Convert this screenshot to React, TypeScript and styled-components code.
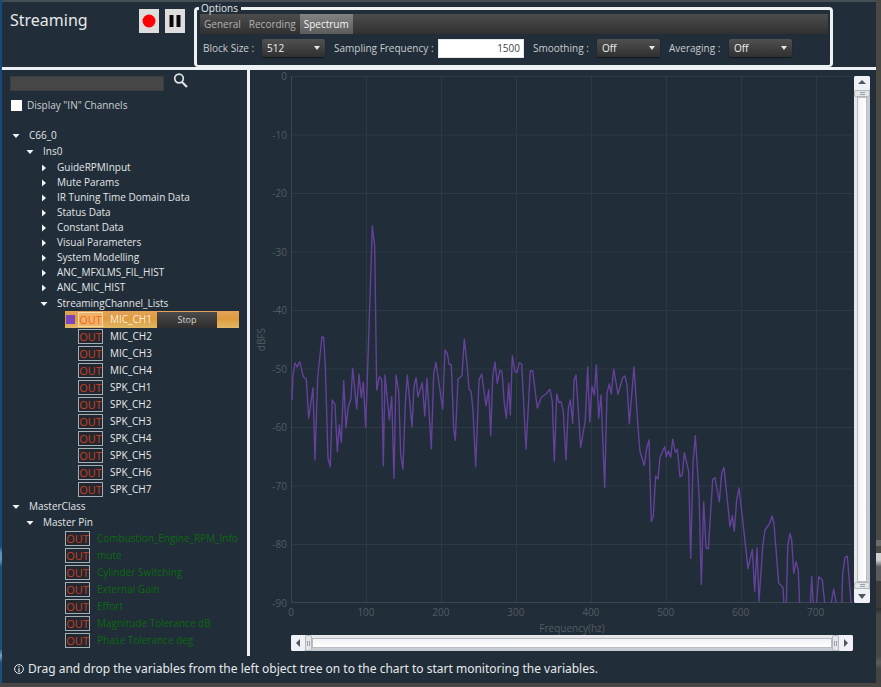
import React, { useState } from "react";
import styled, { createGlobalStyle, css } from "styled-components";

const GlobalStyle = createGlobalStyle`
  * { box-sizing: border-box; }
  body { margin: 0; background: #4a4948; }
  body, button, input, select { font-family: "Open Sans", "Noto Sans", sans-serif; }
`;

const Desktop = styled.div`
  display: grid;
  grid-template-columns: 2px minmax(0, 1fr) 5px;
  grid-template-rows: minmax(0, 1fr) 5px;
  min-height: 100vh;
  background: #484746;
`;

const LeftEdge = styled.div`
  background: linear-gradient(#174a78 0 80%, #5f93b8 81% 82%, #1d4e7c 83% 95%, #7aa3c0 96%, #1d4e7c 97%);
`;

const RightEdge = styled.div`
  background: linear-gradient(
    #4b4743 0 79%, #6b6b6b 79% 80%, #4b4743 80% 81%, #cfcfcf 81% 82%,
    #5a5a5a 83% 85%, #3d3a39 85% 89%, #2d2b2a 89%, #474747 90% 96%, #5b5b5b 97%, #444 98%
  );
`;

const Window = styled.main`
  display: flex;
  flex-direction: column;
  border-top: 2px solid #454e54;
  background: #212d38;
  color: #e6e9eb;
  font-size: 10px;
`;

const Header = styled.header`
  display: flex;
  align-items: flex-start;
  height: 68px;
  padding-right: 43px;
  border-bottom: 3px solid #eef1f3;
`;

const Title = styled.h1`
  width: 137px;
  margin: 0;
  padding: 5px 0 0 8px;
  font-family: "Noto Sans", sans-serif;
  font-size: 16px;
  font-weight: 400;
  line-height: 26px;
`;

const Transport = styled.div`
  display: flex;
  gap: 6px;
  width: 55px;
  padding-top: 7px;
`;

const TransportButton = styled.button`
  display: grid;
  place-items: center;
  width: 20px;
  height: 24px;
  padding: 0;
  border: 0;
  background: #dedede;
`;

const Options = styled.fieldset`
  flex: 1;
  min-width: 0;
  height: 65px;
  margin: 0;
  padding: 0 2px 0 3px;
  border: 3px solid #eef1f3;
  border-bottom-width: 2px;
  border-radius: 4px;
`;

const Legend = styled.legend`
  padding: 0 3px 0 2px;
  margin-left: -1px;
  font-size: 10px;
  line-height: 12px;
`;

const Tabs = styled.div`
  display: flex;
  height: 20px;
  background: linear-gradient(#4d4d4d, #303030);
`;

const Tab = styled.button<{ $active?: boolean }>`
  padding: 0 4px;
  border: 0;
  background: ${(p) => (p.$active ? "linear-gradient(#828282, #5c5c5c)" : "transparent")};
  color: ${(p) => (p.$active ? "#f4f4f4" : "#b2b2b2")};
  font-size: 10px;
  line-height: 18px;
`;

const Fields = styled.div`
  display: flex;
  align-items: center;
  height: 28px;
  padding-left: 3px;
  color: #c9ced2;
  white-space: nowrap;
`;

const Field = styled.label<{ $width: number }>`
  display: flex;
  align-items: center;
  justify-content: space-between;
  width: ${(p) => p.$width}px;
  margin-right: 9px;
`;

const SelectFrame = styled.span`
  display: grid;
  align-items: center;
  width: 63px;
  height: 18px;
  border-radius: 2px;
  background: linear-gradient(#505050, #303030);
  box-shadow: 0 1px 1px #14191e;
  & > * { grid-area: 1 / 1; }
  & > svg { justify-self: end; margin-right: 4px; pointer-events: none; }
`;

const Select = styled.select`
  appearance: none;
  width: 100%;
  height: 18px;
  padding: 0 5px;
  border: 0;
  background: transparent;
  color: #f0f0f0;
  font-size: 10px;
`;

const NumberInput = styled.input`
  width: 86px;
  height: 19px;
  padding: 0 3px;
  border: 1px solid #e8e8e8;
  background: #fff;
  color: #444;
  font-size: 10px;
  text-align: right;
`;

const Body = styled.div`
  flex: 1;
  display: grid;
  grid-template-columns: 248px minmax(0, 1fr);
`;

const Sidebar = styled.aside`
  border-right: 3px solid #eef1f3;
`;

const Search = styled.div`
  display: flex;
  gap: 9px;
  height: 26px;
  padding: 3px 0 0 8px;
`;

const SearchInput = styled.input`
  width: 154px;
  height: 15px;
  margin-top: 3px;
  border: 1px solid #3b3d3e;
  background: #464646;
  color: #eee;
  font-size: 10px;
`;

const SearchButton = styled.button`
  width: 15px;
  height: 15px;
  padding: 0;
  border: 0;
  background: transparent;
`;

const CheckLabel = styled.label`
  display: flex;
  align-items: center;
  gap: 5px;
  height: 18px;
  padding-left: 9px;
  color: #cbd0d4;
`;

const Checkbox = styled.input`
  appearance: none;
  width: 11px;
  height: 11px;
  margin: 0;
  background: #fff;
  &:checked { background: #7849b8; border: 2px solid #fff; }
`;

const Tree = styled.ul`
  margin: 14px 0 0;
  padding: 0;
  list-style: none;
`;

const Branch = styled.ul<{ $flush?: boolean }>`
  margin: 0;
  padding: ${(p) => (p.$flush ? 0 : 1)}px 0 0;
  list-style: none;
`;

const Node = styled.li<{ $expanded: boolean }>`
  &:not(:first-child) { margin-top: ${(p) => (p.$expanded ? 1 : 0)}px; }
`;

const Toggle = styled.button<{ $level: number }>`
  display: flex;
  align-items: center;
  height: 15px;
  padding: 0 0 0 ${(p) => 10 + p.$level * 14}px;
  border: 0;
  background: transparent;
  color: #e2e6e8;
  font-size: 10px;
  line-height: 15px;
  white-space: nowrap;
  & > svg { margin-right: 9px; }
`;

const Channel = styled.li<{ $indent: number; $selected?: boolean }>`
  display: flex;
  align-items: center;
  height: 17px;
  margin: 0 8px 0 ${(p) => p.$indent}px;
  color: #e8ebed;
  font-size: 10px;
  line-height: 15px;
  white-space: nowrap;
  ${(p) =>
    p.$selected &&
    css`
      background: linear-gradient(#e2a45c, #e09a3c 45%, #dfb866);
      color: #fbeedd;
    `}
`;

const Swatch = styled.span<{ $on?: boolean }>`
  width: 9px;
  height: 9px;
  margin: 0 3px 0 1px;
  background: ${(p) => (p.$on ? "#7b45bd" : "transparent")};
`;

const Badge = styled.span<{ $selected?: boolean }>`
  width: 25px;
  height: 15px;
  margin-right: 7px;
  border: 1px solid ${(p) => (p.$selected ? "#f6d9a8" : "#a3adb4")};
  background: ${(p) => (p.$selected ? "#edb268" : "#232830")};
  color: ${(p) => (p.$selected ? "#f4661c" : "#c93f22")};
  font-size: 11px;
  line-height: 13px;
  text-align: center;
`;

const ChannelName = styled.span<{ $muted?: boolean }>`
  color: ${(p) => (p.$muted ? "#0b6a10" : "inherit")};
`;

const StopButton = styled.button`
  width: 60px;
  height: 16px;
  margin: 0 22px 0 auto;
  padding: 0;
  border: 0;
  background: linear-gradient(#4c4c4c, #2d2d2d);
  color: #d5d5d5;
  font-size: 9px;
`;

const ChartPanel = styled.section`
  display: grid;
  grid-template-columns: 41px minmax(0, 1fr) 17px;
  grid-template-rows: minmax(300px, 1fr) 18px 13px 17px;
  padding: 6px 6px 5px 0;
  color: #535c64;
  font-size: 10px;
`;

const YAxis = styled.div`
  display: flex;
  align-items: center;
  justify-content: space-between;
  padding: 0 4px 0 5px;
`;

const YTitle = styled.span`
  writing-mode: vertical-rl;
  transform: rotate(180deg);
  line-height: 12px;
`;

const YTicks = styled.div`
  display: flex;
  flex-direction: column;
  justify-content: space-between;
  align-self: stretch;
  margin: -6px 0;
  line-height: 12px;
  text-align: right;
`;

const Plot = styled.svg`
  display: block;
  width: 100%;
  height: 100%;
  overflow: hidden;
`;

/* Each tick owns a 100 Hz wide cell centred on its value; the axis ends at 750 Hz. */
const XTicks = styled.div`
  grid-column: 2;
  display: flex;
  margin-left: calc(-100% / 15);
  line-height: 18px;
  text-align: center;
  & > span { flex: 1; }
`;

const XTitle = styled.div`
  grid-column: 2;
  line-height: 14px;
  text-align: center;
`;

const ScrollTrack = styled.div<{ $vertical?: boolean }>`
  display: flex;
  align-items: stretch;
  flex-direction: ${(p) => (p.$vertical ? "column" : "row")};
  grid-column: ${(p) => (p.$vertical ? 3 : 2)};
  margin: ${(p) => (p.$vertical ? "0 0 0 1px" : "1px 0 0 0")};
  border-radius: 2px;
  background: linear-gradient(${(p) => (p.$vertical ? "to right" : "to bottom")}, #e8eaee, #c4c8cd);
`;

const Arrow = styled.button`
  display: grid;
  flex: 0 0 14px;
  place-items: center;
  padding: 0;
  border: 0;
  border-radius: 2px;
  background: #eff1f6;
`;

const Grip = styled.span`
  display: grid;
  flex: 0 0 7px;
  place-items: center;
  border: 1px solid #b3b8be;
  border-radius: 2px;
  background: #e3e5e9;
`;

const Thumb = styled.span<{ $vertical?: boolean }>`
  flex: 1;
  margin: ${(p) => (p.$vertical ? "0 3px" : "3px 0")};
  border: 1px solid #b9bdc3;
  background: linear-gradient(${(p) => (p.$vertical ? "to right" : "to bottom")}, #f1f2f4, #fff);
`;

const Footer = styled.footer`
  display: flex;
  align-items: center;
  gap: 4px;
  height: 27px;
  padding: 0 0 1px 12px;
  font-family: "Noto Sans", sans-serif;
  font-size: 12px;
  line-height: 26px;
`;

const Caret = ({ open }: { open: boolean }) => (
  <svg width="8" height="8" viewBox="0 0 8 8" aria-hidden="true">
    <path d={open ? "M0.5 2h7L4 6z" : "M2 0.5v7L6 4z"} fill="#f2f4f5" />
  </svg>
);

const DropArrow = () => (
  <svg width="8" height="6" viewBox="0 0 8 6" aria-hidden="true">
    <path d="M1 1h6L4 5z" fill="#e6e6e6" />
  </svg>
);

const ARROWS = {
  up: "M1 6h8L5 2z",
  down: "M1 3h8L5 8z",
  left: "M7 1v8L3 5z",
  right: "M3 1v8l4-4z",
};

const ScrollArrow = ({ dir }: { dir: keyof typeof ARROWS }) => (
  <Arrow aria-label={`Scroll ${dir}`}>
    <svg width="10" height="10" viewBox="0 0 10 10">
      <path d={ARROWS[dir]} fill="#4c5764" />
    </svg>
  </Arrow>
);

const GripMark = ({ vertical }: { vertical?: boolean }) => (
  <Grip>
    <svg width="5" height="5" viewBox="0 0 5 5">
      <path d={vertical ? "M0 1.5h5M0 3.5h5" : "M1.5 0v5M3.5 0v5"} stroke="#9ba1a8" />
    </svg>
  </Grip>
);

const ScrollBar = ({ vertical }: { vertical?: boolean }) => (
  <ScrollTrack $vertical={vertical}>
    <ScrollArrow dir={vertical ? "up" : "left"} />
    <GripMark vertical={vertical} />
    <Thumb $vertical={vertical} />
    <GripMark vertical={vertical} />
    <ScrollArrow dir={vertical ? "down" : "right"} />
  </ScrollTrack>
);

const Group = ({
  name,
  level,
  open = false,
  flush = false,
  children,
}: {
  name: string;
  level: number;
  open?: boolean;
  flush?: boolean;
  children?: React.ReactNode;
}) => {
  const [expanded, setExpanded] = useState(open);
  return (
    <Node $expanded={expanded}>
      <Toggle $level={level} aria-expanded={expanded} onClick={() => setExpanded(!expanded)}>
        <Caret open={expanded} />
        {name}
      </Toggle>
      {expanded && children && <Branch $flush={flush}>{children}</Branch>}
    </Node>
  );
};

const Dropdown = ({ value, options }: { value: string; options: string[] }) => (
  <SelectFrame>
    <Select defaultValue={value}>
      {options.map((o) => (
        <option key={o}>{o}</option>
      ))}
    </Select>
    <DropArrow />
  </SelectFrame>
);

const GROUPS = [
  "GuideRPMInput",
  "Mute Params",
  "IR Tuning Time Domain Data",
  "Status Data",
  "Constant Data",
  "Visual Parameters",
  "System Modelling",
  "ANC_MFXLMS_FIL_HIST",
  "ANC_MIC_HIST",
];

const CHANNELS = [
  "MIC_CH1", "MIC_CH2", "MIC_CH3", "MIC_CH4",
  "SPK_CH1", "SPK_CH2", "SPK_CH3", "SPK_CH4", "SPK_CH5", "SPK_CH6", "SPK_CH7",
];

const PINS = [
  "Combustion_Engine_RPM_Info",
  "mute",
  "Cylinder Switching",
  "External Gain",
  "Effort",
  "Magnitude Tolerance dB",
  "Phase Tolerance deg",
];

const DB = [0, -10, -20, -30, -40, -50, -60, -70, -80, -90];
const HZ = [0, 100, 200, 300, 400, 500, 600, 700];

const TRACE =
  "292,400 293,375 295,363 297,367 299.7,361.7 303.3,376.7 306.3,379.3 308.7,418.3 313,387.7 315,460 317.7,376.7 322,336.7 323.7,337.3 325.3,366.7 328,458.3 330.3,466.7 332.3,400 335,404.3 337.3,451.7 339.3,425 341.3,442.3 343.7,380.7 346,427.7 348.3,406.7 351,398.3 352.7,368.3 356.7,409 359,374.3 361.3,397.3 363.3,382.3 365.7,427.3 368.3,350 372.3,226 374.7,246.7 376.7,390 379.3,376.7 381.7,379.3 383.3,465.7 385,375 389.3,420 391.7,396.7 394,478.3 396,375 398.7,391.7 400.7,455 403,469 405.3,403.3 407.3,375 412,426.7 414,386.7 416,377.7 418,396.7 422.3,382.7 424.7,416 427,378.3 431.3,448.7 433.7,373.3 436,362.3 442.7,409 445,350 447.3,353.3 449,364 451.3,365 453.7,428.3 455.3,440.3 458,379 462,375.7 464.3,339 467,363.3 469,389.3 471,391 473,410 475.7,466.7 479,380 481.7,374 486,405.7 488.7,390 490.7,435.3 492.7,376.7 495,362 497.3,383.3 500,370 502,371.7 504.3,403.3 506.3,418.3 508.7,383.3 510.3,415 512.3,355.7 515,371.7 517,372.7 519.3,362.7 521.7,364 526,449.3 530.3,370.7 532.7,370.7 537.3,408 541.3,397.3 546,394 550,389.3 552.3,401.7 554.3,461.3 556.7,394 559,402.7 561,401.7 563.3,411.7 566,460 568.3,408.3 570.3,400 572.7,423.3 574,380 576,375 580.7,447.3 585.3,420 587.7,366.7 589.7,422 592,386 594.3,395 596.3,365 598.7,418.3 601,395 604.7,487.7 607,393.3 609.3,384 611.3,394 613.7,369 618,394.3 622.7,377.7 625,376 627,385 629.3,424 634,366.7 637.7,423.3 640,451.7 644.3,465.3 646.7,448.3 649,440 651.3,521.5 653.3,516 655.7,476 658,479 660,457.3 664.7,446.7 666.3,456.7 668.3,451 670.7,457.3 672.7,439.3 675.3,452.3 677.3,449.3 680,476.7 682.3,475 684.3,452.7 688.7,471.7 690.7,558.3 693,463.3 695.3,435.7 699,493.3 701.3,584.3 703.7,501.7 706,547.7 708.3,549 712.7,479.3 715,477.7 719.3,501.7 721.7,473.3 724,467.3 730,526.7 732.3,515.7 734.3,531.3 736.7,500 739,488 742.3,516.7 748,568.7 752.3,549.3 754.7,591.3 757,547.7 759,601.3 762.7,546.7 765,530 769.7,523.3 772,516 774,524 778.7,583.3 783,587.3 784,606 786.3,606 787.7,546.7 790,533.3 791.7,540 793.7,573.3 796,561.7 798.3,570.7 799.7,606 810.3,606 811.7,576.7 813.3,606 816.3,606 818.7,576.7 822.3,580 825,606 830.7,606 833.7,589 836.7,606 841.7,606 842.7,573.3 845,557.3 847.3,556 851.3,606";

const Spectrum = () => (
  <Plot viewBox="291 76 562 527" preserveAspectRatio="none" role="img" aria-label="Spectrum of MIC_CH1">
    <g stroke="#2d3943">
      {DB.slice(0, -1).map((v) => (
        <line key={v} x1="291" x2="853" y1={76.5 - v * 5.85} y2={76.5 - v * 5.85} />
      ))}
      {HZ.slice(1).map((v) => (
        <line key={v} x1={291.5 + v * 0.75} x2={291.5 + v * 0.75} y1="76" y2="603" />
      ))}
    </g>
    <path d="M291.5 76V602.5H853" fill="none" stroke="#3b4650" />
    <polyline points={TRACE} fill="none" stroke="#64419a" strokeWidth="1.4" strokeLinejoin="round" />
  </Plot>
);

export default function App() {
  return (
    <>
      <GlobalStyle />
      <Desktop>
        <LeftEdge />
        <Window>
          <Header>
            <Title>Streaming</Title>
            <Transport>
              <TransportButton aria-label="Record">
                <svg width="14" height="14" viewBox="0 0 14 14">
                  <circle cx="7" cy="7" r="6.5" fill="#fb0007" />
                </svg>
              </TransportButton>
              <TransportButton aria-label="Pause">
                <svg width="12" height="14" viewBox="0 0 12 14">
                  <path d="M0.5 1h4v12h-4zM7.5 1h4v12h-4z" fill="#0a0a0a" />
                </svg>
              </TransportButton>
            </Transport>
            <Options>
              <Legend>Options</Legend>
              <Tabs role="tablist">
                <Tab role="tab">General</Tab>
                <Tab role="tab">Recording</Tab>
                <Tab role="tab" $active aria-selected>
                  Spectrum
                </Tab>
              </Tabs>
              <Fields>
                <Field $width={122}>
                  Block Size :
                  <Dropdown value="512" options={["256", "512", "1024"]} />
                </Field>
                <Field $width={190}>
                  Sampling Frequency :
                  <NumberInput defaultValue="1500" inputMode="numeric" />
                </Field>
                <Field $width={127}>
                  Smoothing :
                  <Dropdown value="Off" options={["Off", "On"]} />
                </Field>
                <Field $width={123}>
                  Averaging :
                  <Dropdown value="Off" options={["Off", "On"]} />
                </Field>
              </Fields>
            </Options>
          </Header>
          <Body>
            <Sidebar>
              <Search>
                <SearchInput type="search" aria-label="Search variables" />
                <SearchButton aria-label="Search">
                  <svg width="15" height="15" viewBox="0 0 15 15">
                    <circle cx="6" cy="5.5" r="4.3" fill="none" stroke="#dfe3e6" strokeWidth="1.7" />
                    <path d="M9 9l5 5" stroke="#dfe3e6" strokeWidth="2.2" />
                  </svg>
                </SearchButton>
              </Search>
              <CheckLabel>
                <Checkbox type="checkbox" />
                Display "IN" Channels
              </CheckLabel>
              <Tree>
                <Group name="C66_0" level={0} open>
                  <Group name="Ins0" level={1} open>
                    {GROUPS.map((g) => (
                      <Group key={g} name={g} level={2} />
                    ))}
                    <Group name="StreamingChannel_Lists" level={2} open flush>
                      {CHANNELS.map((c, i) => (
                        <Channel key={c} $indent={63} $selected={i === 0}>
                          <Swatch $on={i === 0} />
                          <Badge $selected={i === 0}>OUT</Badge>
                          <ChannelName>{c}</ChannelName>
                          {i === 0 && <StopButton>Stop</StopButton>}
                        </Channel>
                      ))}
                    </Group>
                  </Group>
                </Group>
                <Group name="MasterClass" level={0} open>
                  <Group name="Master Pin" level={1} open flush>
                    {PINS.map((p) => (
                      <Channel key={p} $indent={63}>
                        <Badge>OUT</Badge>
                        <ChannelName $muted>{p}</ChannelName>
                      </Channel>
                    ))}
                  </Group>
                </Group>
              </Tree>
            </Sidebar>
            <ChartPanel>
              <YAxis>
                <YTitle>dBFS</YTitle>
                <YTicks>
                  {DB.map((v) => (
                    <span key={v}>{v}</span>
                  ))}
                </YTicks>
              </YAxis>
              <Spectrum />
              <ScrollBar vertical />
              <XTicks>
                {HZ.map((v) => (
                  <span key={v}>{v}</span>
                ))}
              </XTicks>
              <XTitle>Frequency(hz)</XTitle>
              <ScrollBar />
            </ChartPanel>
          </Body>
          <Footer>
            <svg width="10" height="10" viewBox="0 0 10 10" aria-hidden="true">
              <circle cx="5" cy="5" r="4.4" fill="none" stroke="#e6e9eb" />
              <path d="M5 2v1.3M5 4.2v3.8" stroke="#e6e9eb" strokeWidth="1.2" />
            </svg>
            Drag and drop the variables from the left object tree on to the chart to start monitoring the variables.
          </Footer>
        </Window>
        <RightEdge />
      </Desktop>
    </>
  );
}
